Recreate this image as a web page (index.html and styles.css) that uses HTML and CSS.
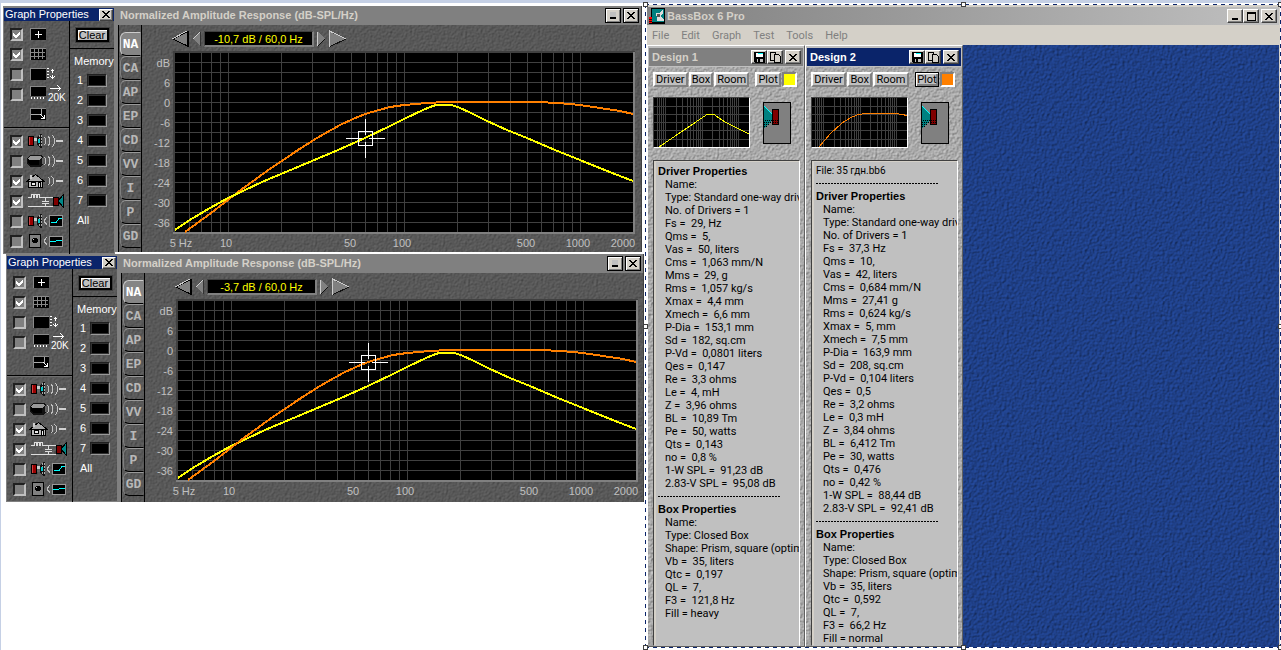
FILE: index.html
```html
<!DOCTYPE html>
<html lang="en">
<head>
    <meta charset="UTF-8">
    <meta name="viewport" content="width=device-width, initial-scale=1.0">
    <title>BassBox 6 Pro</title>
    <link rel="stylesheet" href="styles.css">
</head>
<body>
    <!-- shared icons -->
    <svg class="defs" width="0" height="0" aria-hidden="true">
        <symbol id="i-close" viewBox="0 0 8 7"><path d="M0 0h2v1h1v1h2V1h1V0h2v1H7v1H6v1H5v1h1v1h1v1h1v1H6V6H5V5H3v1H2v1H0V6h1V5h1V4h1V3H2V2H1V1H0z" fill="#000"/></symbol>
        <symbol id="i-min" viewBox="0 0 8 7"><path d="M1 5h6v2H1z" fill="#000"/></symbol>
        <symbol id="i-min-off" viewBox="0 0 8 7"><path d="M1 0h6v5H1z" fill="#c0c0c0"/><path d="M1 5h6v2H1z" fill="#000"/></symbol>
        <symbol id="i-max" viewBox="0 0 9 9"><path d="M0 0h9v9H0zM1 2v6h7V2z" fill="#000" fill-rule="evenodd"/></symbol>
        <symbol id="i-save" viewBox="0 0 11 11"><path d="M0 0h11v11H1l-1-1z" fill="#000"/><path d="M2 1h7v4H2z" fill="#fff"/><path d="M4 1h5v1H4z" fill="#0ff"/><path d="M3 7h6v3H3z" fill="#c0c0c0"/><path d="M4 7h2v3H4z" fill="#000"/></symbol>
        <symbol id="i-copy" viewBox="0 0 11 11"><path d="M.5.5h5v8h-5z" fill="#d4d0c8" stroke="#000"/><path d="M4.500 2.500h4l2 2v6h-6z" fill="#d4d0c8" stroke="#000"/></symbol>
        <symbol id="i-cursor" viewBox="0 0 36 16"><path d="M0 2h16v12H0z" fill="#000"/><path d="M0 14V2h16" fill="none" stroke="#8a8a8a"/><path d="M8.500 5v7M5 8.500h7" stroke="#fff"/></symbol>
        <symbol id="i-grid" viewBox="0 0 36 16"><path d="M0 2h16v12H0z" fill="#000"/><path d="M0 14V2h16" fill="none" stroke="#8a8a8a"/><path d="M4.500 3v10M8.500 3v10M12.500 3v10M1 6.500h14M1 10.500h14" stroke="#888"/></symbol>
        <symbol id="i-vscale" viewBox="0 0 36 16"><path d="M0 2h16v12H0z" fill="#000"/><path d="M0 14V2h16" fill="none" stroke="#8a8a8a"/><path d="M17 2.500h2M17 5.500h2M17 8.500h2M17 11.500h2M22.500 3v4M22.500 9v4M20.500 5.500l2-2 2 2M20.500 10.500l2 2 2-2" fill="none" stroke="#fff"/></symbol>
        <symbol id="i-hscale" viewBox="0 0 36 16"><path d="M0 1h16v10H0z" fill="#000"/><path d="M0 11V1h16" fill="none" stroke="#8a8a8a"/><path d="M1.500 12v2M4.500 12v2M7.500 12v2M10.500 12v2M13.500 12v2M20 3.500h10M27.500.5l3 3-3 3" fill="none" stroke="#fff"/></symbol>
        <symbol id="i-resize" viewBox="0 0 36 16"><path d="M0 2h16v12H0z" fill="#000"/><path d="M0 14V2h16" fill="none" stroke="#8a8a8a"/><path d="M1 8.500h10.500V3" fill="none" stroke="#aaa"/><path d="M10.500 8.500l4 4M11 12.500h4M14.500 9v4" stroke="#fff"/></symbol>
        <symbol id="i-driver" viewBox="0 0 36 16"><path d="M-2 3h6v10h-6z" fill="#000"/><path d="M-1 4h4v8h-4z" fill="#900"/><path d="M-1 4h1v8h-1z" fill="#c44"/><path d="M4 5h3v6H4z" fill="#ccc"/><path d="M4 8h3v3H4z" fill="#666"/><path d="M7 4l3-3h2v14h-2l-3-3z" fill="#111"/><path d="M9.500 2v12M11.500 2v12" stroke="#aaa" stroke-dasharray="2 1"/><path d="M8 6h2v4H8z" fill="#0cc"/></symbol>
        <symbol id="i-wave" viewBox="0 0 36 16"><path d="M14.500 4l1 2v4l-1 2M18.500 3l1 3v4l-1 3M22.500 2l2 4v4l-2 4" fill="none" stroke="#c0c0c0"/><path d="M26 8h7" stroke="#d0d0d0" stroke-width="2"/></symbol>
        <symbol id="i-box" viewBox="0 0 36 16"><path d="M-3 5l3-3h11l2 2v7l-3 3H0l-3-3z" fill="#111"/><path d="M-2 6l2-3h10l2 1-3 3H-1z" fill="#999"/><path d="M-2 6l2 1h9v5H0l-2-2z" fill="#000"/><path d="M12 5v6" stroke="#666"/></symbol>
        <symbol id="i-room" viewBox="0 0 36 16"><path d="M-1.500 7.500h14v7h-14z" fill="#bbb" stroke="#000"/><path d="M-3.500 8.500l9-7 9 7z" fill="#aaa" stroke="#000"/><path d="M0 2h2v4H0z" fill="#ccc"/><path d="M1.500 9.500h4v3h-4zM8.500 9.500h2v5h-2z" fill="#eee" stroke="#000"/><path d="M18.500 4l1 2v4l-1 2M21.500 3l2 3v4l-2 3" fill="none" stroke="#c0c0c0"/><path d="M26 8h7" stroke="#d0d0d0" stroke-width="2"/></symbol>
        <symbol id="i-net" viewBox="0 0 36 16"><path d="M-2 4.500h3l1-3h1l1 3 1-3h1l1 3 1-3h1l1 3h13M-2 13.500h25M15.500 5v3M12 8.500h7M12 10.500h7M15.500 11v2" fill="none" stroke="#ddd"/><path d="M23 4h5v8h-5z" fill="#800000" stroke="#000"/><path d="M28 8l5-6v12l-5-6z" fill="#088" stroke="#000"/></symbol>
        <symbol id="i-curve" viewBox="0 0 36 16"><path d="M17 4l-3 4 3 4" fill="none" stroke="#c0c0c0"/><path d="M19.500 2.500h13v11h-13z" fill="#000" stroke="#999"/><path d="M21 9.500h5l3-4h3" fill="none" stroke="#0ff"/></symbol>
        <symbol id="i-room-curve" viewBox="0 0 36 16"><path d="M-.5 1.500h11v13h-11z" fill="#808080" stroke="#000"/><path d="M3 5h4v5H3z" fill="#000"/><path d="M2 6h6v3H2z" fill="#000"/><path d="M3 6h1v1H3z" fill="#ccc"/><path d="M17 4l-3 4 3 4" fill="none" stroke="#c0c0c0"/><path d="M19.500 3.500h13v10h-13z" fill="#000" stroke="#999"/><path d="M20 8.500h5l2-1h5" fill="none" stroke="#0ff"/></symbol>
        <symbol id="i-left" viewBox="0 0 17 16"><path d="M1 8L15.500 1v14z" fill="#808080" stroke="#000"/><path d="M15.500 0v16" stroke="#000" stroke-width="2"/><path d="M0 8L15 0" stroke="#ccc"/></symbol>
        <symbol id="i-left-s" viewBox="0 0 9 16"><path d="M1 8l7-7v14z" fill="#808080"/><path d="M1 8l7-7" stroke="#ccc"/><path d="M8.500 1v14" stroke="#333"/></symbol>
        <symbol id="i-right-s" viewBox="0 0 9 16"><path d="M1 1l7 7-7 7z" fill="#808080"/><path d="M.5 15V1" stroke="#ccc"/><path d="M1 15l7-7" stroke="#111"/></symbol>
        <symbol id="i-right" viewBox="0 0 18 16"><path d="M1 1l16 7-16 7z" fill="#808080"/><path d="M.5 16V0L17 8" fill="none" stroke="#ccc"/><path d="M1 15.500L17 8" stroke="#111"/></symbol>
        <symbol id="i-speaker" viewBox="0 0 28 42"><path d="M.5.5h27v41H.5z" fill="#808080" stroke="#000"/><path d="M1 4l8 8v6l-8 9z" fill="#008080"/><path d="M1 4l8 8" stroke="#0ff"/><path d="M9 18.500H1M8 20.500H1M6 22.500H1M4 24.500H1" stroke="#000" stroke-dasharray="1 1"/><path d="M9.500 7.500h6v15h-6z" fill="#800000" stroke="#000"/><path d="M10 18.500h5M10 20.500h5" stroke="#000" stroke-dasharray="1 1"/></symbol>
        <symbol id="plot-grid" viewBox="0 0 458 179">
            <path d="M0 0h458v179H0z" fill="#000"/>
            <path d="M0 9.500h458M0 19.500h458M0 29.500h458M0 39.500h458M0 49.500h458M0 59.500h458M0 69.500h458M0 79.500h458M0 89.500h458M0 99.500h458M0 109.500h458M0 119.500h458M0 129.500h458M0 139.500h458M0 149.500h458M0 159.500h458M0 169.500h458" stroke="#404040"/>
            <path d="M14.500 0v179M26.500 0v179M36.500 0v179M45.500 0v179M53.500 0v179M106.500 0v179M137.500 0v179M159.500 0v179M176.500 0v179M190.500 0v179M202.500 0v179M212.500 0v179M221.500 0v179M229.500 0v179M282.500 0v179M313.500 0v179M335.500 0v179M352.500 0v179M366.500 0v179M378.500 0v179M388.500 0v179M397.500 0v179M405.500 0v179" stroke="#404040"/>
        </symbol>
        <symbol id="curve-1" viewBox="0 0 458 179"><path d="M0 177L13 168 35 155 53 145 68 138 87 129 106 121 137 108 163 97 190 85 215 73 229 66 248 57 255 54 261 52 268 51.500 276 52 283 54 296 60 312 68 332 77 352 85 380 97 405 107 432 118 458 128" fill="none" stroke="#ff0" stroke-width="2"/></symbol>
        <symbol id="curve-2" viewBox="0 0 458 179"><path d="M10 179L32 163 53 147 63 139 92 118 123 97 142 85 165 72 178 66 190 61 204 57 215 54 229 52 252 50 270 49 363 49 383 50 405 52 425 55 445 58 458 61" fill="none" stroke="#ff8000" stroke-width="2"/></symbol>
        <symbol id="cross" viewBox="0 0 40 40"><path d="M12.500 12.500h14v14h-14z" fill="none" stroke="#fff"/><path d="M0 19.500h16M23 19.500h16M19.500 0v16M19.500 23v16" stroke="#fff"/></symbol>
        <symbol id="thumb-grid" viewBox="0 0 95 49">
            <path d="M0 0h95v49H0z" fill="#000"/>
            <path d="M0 8.500h95M0 16.500h95M0 24.500h95M0 32.500h95M0 41.500h95M3.500 0v49M5.500 0v49M7.500 0v49M9.500 0v49M11.500 0v49M22.500 0v49M28.500 0v49M33.500 0v49M36.500 0v49M39.500 0v49M42.500 0v49M44.500 0v49M46.500 0v49M48.500 0v49M58.500 0v49M65.500 0v49M69.500 0v49M73.500 0v49M76.500 0v49M78.500 0v49M80.500 0v49M82.500 0v49M84.500 0v49" stroke="#404040"/>
        </symbol>
    </svg>

    <div class="desktop">
        <main class="graphs">
            <div class="graph-row">
                <section class="props">
                    <header class="props-title"><span>Graph Properties</span><button class="win-btn small" aria-label="Close"><svg width="8" height="7"><use href="#i-close"/></svg></button></header>
                    <div class="props-body">
                        <div class="options">
                            <div class="group">
                                <label class="option"><input type="checkbox" aria-label="Cursor" checked><svg width="36" height="16"><use href="#i-cursor"/></svg></label>
                                <label class="option"><input type="checkbox" aria-label="Grid" checked><svg width="36" height="16"><use href="#i-grid"/></svg></label>
                                <label class="option"><input type="checkbox" aria-label="Vertical scale"><svg width="36" height="16"><use href="#i-vscale"/></svg></label>
                                <label class="option"><input type="checkbox" aria-label="Extend range"><svg width="36" height="18"><use href="#i-hscale" width="36" height="16"/><text x="18" y="16" class="khz">20K</text></svg></label>
                                <button class="resize" aria-label="Resize"><svg width="36" height="16"><use href="#i-resize"/></svg></button>
                            </div>
                            <div class="group">
                                <label class="option"><input type="checkbox" aria-label="Driver" checked><svg width="36" height="16"><use href="#i-driver"/><use href="#i-wave"/></svg></label>
                                <label class="option"><input type="checkbox" aria-label="Box"><svg width="36" height="16"><use href="#i-box"/><use href="#i-wave"/></svg></label>
                                <label class="option"><input type="checkbox" aria-label="Room" checked><svg width="36" height="16"><use href="#i-room"/></svg></label>
                                <label class="option"><input type="checkbox" aria-label="Network" checked><svg width="36" height="16"><use href="#i-net"/></svg></label>
                                <label class="option"><input type="checkbox" aria-label="Driver response"><svg width="36" height="16"><use href="#i-driver"/><use href="#i-curve"/></svg></label>
                                <label class="option"><input type="checkbox" aria-label="Room response"><svg width="36" height="16"><use href="#i-room-curve"/></svg></label>
                            </div>
                        </div>
                        <div class="memory">
                            <div class="clear-row"><button class="clear">Clear</button></div>
                            <div class="memory-title">Memory</div>
                            <div class="slot">1<button aria-label="Memory 1"></button></div>
                            <div class="slot">2<button aria-label="Memory 2"></button></div>
                            <div class="slot">3<button aria-label="Memory 3"></button></div>
                            <div class="slot">4<button aria-label="Memory 4"></button></div>
                            <div class="slot">5<button aria-label="Memory 5"></button></div>
                            <div class="slot">6<button aria-label="Memory 6"></button></div>
                            <div class="slot">7<button aria-label="Memory 7"></button></div>
                            <div class="slot">All</div>
                        </div>
                    </div>
                </section>
                <section class="response">
                    <header class="response-title">
                        <h2>Normalized Amplitude Response (dB-SPL/Hz)</h2>
                        <button class="win-btn framed" aria-label="Minimize"><svg width="8" height="7"><use href="#i-min-off"/></svg></button>
                        <button class="win-btn framed" aria-label="Close"><svg width="8" height="7"><use href="#i-close"/></svg></button>
                    </header>
                    <div class="response-body">
                        <nav class="tabs">
                            <button class="tab active">NA</button>
                            <button class="tab">CA</button>
                            <button class="tab">AP</button>
                            <button class="tab">EP</button>
                            <button class="tab">CD</button>
                            <button class="tab">VV</button>
                            <button class="tab">I</button>
                            <button class="tab">P</button>
                            <button class="tab">GD</button>
                        </nav>
                        <div class="chart">
                            <div class="readout">
                                <button aria-label="Fast left"><svg width="17" height="16"><use href="#i-left"/></svg></button>
                                <button aria-label="Left"><svg width="9" height="16"><use href="#i-left-s"/></svg></button>
                                <output>-10,7 dB / 60,0 Hz</output>
                                <button aria-label="Right"><svg width="9" height="16"><use href="#i-right-s"/></svg></button>
                                <button aria-label="Fast right"><svg width="18" height="16"><use href="#i-right"/></svg></button>
                            </div>
                            <svg class="plot" viewBox="0 0 496 201">
                                <path d="M31 0h462v183H31z" fill="#404040"/>
                                <path d="M31 181h462v2H31zM491 1h2v182h-2z" fill="#808080"/>
                                <use href="#plot-grid" x="33" y="2" width="458" height="179"/>
                                <use href="#curve-2" x="33" y="2" width="458" height="179"/>
                                <use href="#curve-1" x="33" y="2" width="458" height="179"/>
                                <use href="#cross" x="204" y="68" width="40" height="40"/>
                                <g class="y-labels">
                                    <text x="28" y="16">dB</text>
                                    <text x="28" y="36">6</text>
                                    <text x="28" y="56">0</text>
                                    <text x="28" y="76">-6</text>
                                    <text x="28" y="96">-12</text>
                                    <text x="28" y="116">-18</text>
                                    <text x="28" y="136">-24</text>
                                    <text x="28" y="156">-30</text>
                                    <text x="28" y="176">-36</text>
                                </g>
                                <g class="x-labels">
                                    <text x="39" y="196">5 Hz</text>
                                    <text x="84" y="196">10</text>
                                    <text x="208" y="196">50</text>
                                    <text x="260" y="196">100</text>
                                    <text x="384" y="196">500</text>
                                    <text x="436" y="196">1000</text>
                                    <text x="481" y="196">2000</text>
                                </g>
                            </svg>
                        </div>
                    </div>
                </section>
            </div>

            <div class="graph-row second">
                <section class="props">
                    <header class="props-title"><span>Graph Properties</span><button class="win-btn small" aria-label="Close"><svg width="8" height="7"><use href="#i-close"/></svg></button></header>
                    <div class="props-body">
                        <div class="options">
                            <div class="group">
                                <label class="option"><input type="checkbox" aria-label="Cursor" checked><svg width="36" height="16"><use href="#i-cursor"/></svg></label>
                                <label class="option"><input type="checkbox" aria-label="Grid" checked><svg width="36" height="16"><use href="#i-grid"/></svg></label>
                                <label class="option"><input type="checkbox" aria-label="Vertical scale"><svg width="36" height="16"><use href="#i-vscale"/></svg></label>
                                <label class="option"><input type="checkbox" aria-label="Extend range"><svg width="36" height="18"><use href="#i-hscale" width="36" height="16"/><text x="18" y="16" class="khz">20K</text></svg></label>
                                <button class="resize" aria-label="Resize"><svg width="36" height="16"><use href="#i-resize"/></svg></button>
                            </div>
                            <div class="group">
                                <label class="option"><input type="checkbox" aria-label="Driver" checked><svg width="36" height="16"><use href="#i-driver"/><use href="#i-wave"/></svg></label>
                                <label class="option"><input type="checkbox" aria-label="Box"><svg width="36" height="16"><use href="#i-box"/><use href="#i-wave"/></svg></label>
                                <label class="option"><input type="checkbox" aria-label="Room" checked><svg width="36" height="16"><use href="#i-room"/></svg></label>
                                <label class="option"><input type="checkbox" aria-label="Network" checked><svg width="36" height="16"><use href="#i-net"/></svg></label>
                                <label class="option"><input type="checkbox" aria-label="Driver response"><svg width="36" height="16"><use href="#i-driver"/><use href="#i-curve"/></svg></label>
                                <label class="option"><input type="checkbox" aria-label="Room response"><svg width="36" height="16"><use href="#i-room-curve"/></svg></label>
                            </div>
                        </div>
                        <div class="memory">
                            <div class="clear-row"><button class="clear">Clear</button></div>
                            <div class="memory-title">Memory</div>
                            <div class="slot">1<button aria-label="Memory 1"></button></div>
                            <div class="slot">2<button aria-label="Memory 2"></button></div>
                            <div class="slot">3<button aria-label="Memory 3"></button></div>
                            <div class="slot">4<button aria-label="Memory 4"></button></div>
                            <div class="slot">5<button aria-label="Memory 5"></button></div>
                            <div class="slot">6<button aria-label="Memory 6"></button></div>
                            <div class="slot">7<button aria-label="Memory 7"></button></div>
                            <div class="slot">All</div>
                        </div>
                    </div>
                </section>
                <section class="response">
                    <header class="response-title">
                        <h2>Normalized Amplitude Response (dB-SPL/Hz)</h2>
                        <button class="win-btn framed" aria-label="Minimize"><svg width="8" height="7"><use href="#i-min-off"/></svg></button>
                        <button class="win-btn framed" aria-label="Close"><svg width="8" height="7"><use href="#i-close"/></svg></button>
                    </header>
                    <div class="response-body">
                        <nav class="tabs">
                            <button class="tab active">NA</button>
                            <button class="tab">CA</button>
                            <button class="tab">AP</button>
                            <button class="tab">EP</button>
                            <button class="tab">CD</button>
                            <button class="tab">VV</button>
                            <button class="tab">I</button>
                            <button class="tab">P</button>
                            <button class="tab">GD</button>
                        </nav>
                        <div class="chart">
                            <div class="readout">
                                <button aria-label="Fast left"><svg width="17" height="16"><use href="#i-left"/></svg></button>
                                <button aria-label="Left"><svg width="9" height="16"><use href="#i-left-s"/></svg></button>
                                <output>-3,7 dB / 60,0 Hz</output>
                                <button aria-label="Right"><svg width="9" height="16"><use href="#i-right-s"/></svg></button>
                                <button aria-label="Fast right"><svg width="18" height="16"><use href="#i-right"/></svg></button>
                            </div>
                            <svg class="plot" viewBox="0 0 496 201">
                                <path d="M31 0h462v183H31z" fill="#404040"/>
                                <path d="M31 181h462v2H31zM491 1h2v182h-2z" fill="#808080"/>
                                <use href="#plot-grid" x="33" y="2" width="458" height="179"/>
                                <use href="#curve-1" x="33" y="2" width="458" height="179"/>
                                <use href="#curve-2" x="33" y="2" width="458" height="179"/>
                                <use href="#cross" x="204" y="44" width="40" height="40"/>
                                <g class="y-labels">
                                    <text x="28" y="16">dB</text>
                                    <text x="28" y="36">6</text>
                                    <text x="28" y="56">0</text>
                                    <text x="28" y="76">-6</text>
                                    <text x="28" y="96">-12</text>
                                    <text x="28" y="116">-18</text>
                                    <text x="28" y="136">-24</text>
                                    <text x="28" y="156">-30</text>
                                    <text x="28" y="176">-36</text>
                                </g>
                                <g class="x-labels">
                                    <text x="39" y="196">5 Hz</text>
                                    <text x="84" y="196">10</text>
                                    <text x="208" y="196">50</text>
                                    <text x="260" y="196">100</text>
                                    <text x="384" y="196">500</text>
                                    <text x="436" y="196">1000</text>
                                    <text x="481" y="196">2000</text>
                                </g>
                            </svg>
                        </div>
                    </div>
                </section>
            </div>
        </main>

        <div class="app-area">
            <section class="app">
                <header class="app-title">
                    <svg width="16" height="16" viewBox="0 0 16 16"><path d="M2 0h14v16H0V9h2z" fill="#000"/><path d="M3 1h12v13H3z" fill="#008080"/><path d="M7 5h3l4-3v4l-3 2 4 3v2H8V8H7z" fill="#ddd"/><path d="M8 6h3v3H8z" fill="#555"/><path d="M0 9h3v6H0z" fill="#f00"/><path d="M0 11.500h3M0 13.500h3" stroke="#400"/></svg>
                    <h1>BassBox 6 Pro</h1>
                    <button class="win-btn" aria-label="Minimize"><svg width="8" height="7"><use href="#i-min"/></svg></button>
                    <button class="win-btn" aria-label="Maximize"><svg width="9" height="9"><use href="#i-max"/></svg></button>
                    <button class="win-btn close" aria-label="Close"><svg width="8" height="7"><use href="#i-close"/></svg></button>
                </header>
                <nav class="menu">
                    <button>File</button>
                    <button>Edit</button>
                    <button>Graph</button>
                    <button>Test</button>
                    <button>Tools</button>
                    <button>Help</button>
                </nav>
                <div class="workspace">
                    <article class="design">
                        <header class="design-title">
                            <h2>Design 1</h2>
                            <button class="win-btn" aria-label="Save"><svg width="11" height="11"><use href="#i-save"/></svg></button>
                            <button class="win-btn" aria-label="Copy"><svg width="11" height="11"><use href="#i-copy"/></svg></button>
                            <button class="win-btn close" aria-label="Close"><svg width="8" height="7"><use href="#i-close"/></svg></button>
                        </header>
                        <div class="toolbar">
                            <button>Driver</button>
                            <button>Box</button>
                            <button>Room</button>
                            <button class="plot-btn">Plot</button>
                            <button class="swatch yellow" aria-label="Plot color"></button>
                        </div>
                        <div class="preview">
                            <svg class="thumb" width="95" height="49" viewBox="0 0 95 49"><use href="#thumb-grid"/><path d="M5 49L30 32 53 16.500H60L71 24 85 31 95 36" fill="none" stroke="#ff0"/></svg>
                            <svg width="28" height="42"><use href="#i-speaker"/></svg>
                        </div>
                        <div class="info">
                            <h3>Driver Properties</h3>
                            <p>Name:</p>
                            <p>Type: Standard one-way driver</p>
                            <p>No. of Drivers = 1</p>
                            <p>Fs =  29, Hz</p>
                            <p>Qms =  5,</p>
                            <p>Vas =  50, liters</p>
                            <p>Cms =  1,063 mm/N</p>
                            <p>Mms =  29, g</p>
                            <p>Rms =  1,057 kg/s</p>
                            <p>Xmax =  4,4 mm</p>
                            <p>Xmech =  6,6 mm</p>
                            <p>P-Dia =  153,1 mm</p>
                            <p>Sd =  182, sq.cm</p>
                            <p>P-Vd =  0,0801 liters</p>
                            <p>Qes =  0,147</p>
                            <p>Re =  3,3 ohms</p>
                            <p>Le =  4, mH</p>
                            <p>Z =  3,96 ohms</p>
                            <p>BL =  10,89 Tm</p>
                            <p>Pe =  50, watts</p>
                            <p>Qts =  0,143</p>
                            <p>no =  0,8 %</p>
                            <p>1-W SPL =  91,23 dB</p>
                            <p>2.83-V SPL =  95,08 dB</p>
                            <hr>
                            <h3>Box Properties</h3>
                            <p>Name:</p>
                            <p>Type: Closed Box</p>
                            <p>Shape: Prism, square (optimum)</p>
                            <p>Vb =  35, liters</p>
                            <p>Qtc =  0,197</p>
                            <p>QL =  7,</p>
                            <p>F3 =  121,8 Hz</p>
                            <p>Fill = heavy</p>
                        </div>
                    </article>
                    <article class="design current">
                        <header class="design-title">
                            <h2>Design 2</h2>
                            <button class="win-btn" aria-label="Save"><svg width="11" height="11"><use href="#i-save"/></svg></button>
                            <button class="win-btn" aria-label="Copy"><svg width="11" height="11"><use href="#i-copy"/></svg></button>
                            <button class="win-btn close" aria-label="Close"><svg width="8" height="7"><use href="#i-close"/></svg></button>
                        </header>
                        <div class="toolbar">
                            <button>Driver</button>
                            <button>Box</button>
                            <button>Room</button>
                            <button class="plot-btn pressed">Plot</button>
                            <button class="swatch orange" aria-label="Plot color"></button>
                        </div>
                        <div class="preview">
                            <svg class="thumb" width="95" height="49" viewBox="0 0 95 49"><use href="#thumb-grid"/><path d="M7 49L18 36 30 25 38 20 45 17 52 15.500H84L90 16.500 95 17.500" fill="none" stroke="#ff8000"/></svg>
                            <svg width="28" height="42"><use href="#i-speaker"/></svg>
                        </div>
                        <div class="info">
                            <p class="file">File: 35 гдн.bb6</p>
                            <hr>
                            <h3>Driver Properties</h3>
                            <p>Name:</p>
                            <p>Type: Standard one-way driver</p>
                            <p>No. of Drivers = 1</p>
                            <p>Fs =  37,3 Hz</p>
                            <p>Qms =  10,</p>
                            <p>Vas =  42, liters</p>
                            <p>Cms =  0,684 mm/N</p>
                            <p>Mms =  27,41 g</p>
                            <p>Rms =  0,624 kg/s</p>
                            <p>Xmax =  5, mm</p>
                            <p>Xmech =  7,5 mm</p>
                            <p>P-Dia =  163,9 mm</p>
                            <p>Sd =  208, sq.cm</p>
                            <p>P-Vd =  0,104 liters</p>
                            <p>Qes =  0,5</p>
                            <p>Re =  3,2 ohms</p>
                            <p>Le =  0,3 mH</p>
                            <p>Z =  3,84 ohms</p>
                            <p>BL =  6,412 Tm</p>
                            <p>Pe =  30, watts</p>
                            <p>Qts =  0,476</p>
                            <p>no =  0,42 %</p>
                            <p>1-W SPL =  88,44 dB</p>
                            <p>2.83-V SPL =  92,41 dB</p>
                            <hr>
                            <h3>Box Properties</h3>
                            <p>Name:</p>
                            <p>Type: Closed Box</p>
                            <p>Shape: Prism, square (optimum)</p>
                            <p>Vb =  35, liters</p>
                            <p>Qtc =  0,592</p>
                            <p>QL =  7,</p>
                            <p>F3 =  66,2 Hz</p>
                            <p>Fill = normal</p>
                        </div>
                    </article>
                </div>
            </section>
            <div class="marquee">
                <i class="handle top left"></i>
                <i class="handle top center"></i>
                <i class="handle top right"></i>
                <i class="handle middle left"></i>
                <i class="handle middle right"></i>
                <i class="handle bottom left"></i>
                <i class="handle bottom center"></i>
                <i class="handle bottom right"></i>
            </div>
        </div>
    </div>
</body>
</html>
```
FILE: styles.css
```css
* {
    box-sizing: border-box;
}
body {
    margin: 0;
    font-family: "Liberation Sans", Arial, sans-serif;
    font-size: 11px;
    line-height: 13px;
    color: #000;
    background-color: #fff;
}
h1, h2, h3, p {
    margin: 0;
    font-size: 11px;
}
button {
    font: inherit;
    color: inherit;
    padding: 0;
    margin: 0;
    border: none;
    background: none;
}
svg {
    display: block;
    flex: none;
    overflow: visible;
    shape-rendering: crispEdges;
}
symbol {
    overflow: visible;
}
.defs {
    position: absolute;
}

.desktop {
    display: grid;
    grid-template-columns: minmax(644px, 50%) 1fr;
    height: 100vh;
    min-height: 650px;
    border-top: 3px solid #c5d0e5;
}
.graphs {
    padding: 3px 0 0 2px;
    border-left: 1px solid #c5d0e5;
}
.graph-row {
    display: flex;
    align-items: flex-start;
    height: 248px;
    padding-right: 2px;
}
.graph-row.second {
    padding-left: 3px;
    padding-right: 0;
}

/* stone textures */
.props, .response, .design, .workspace {
    background-size: 128px 128px;
}
.props, .response {
    background-color: #585858;
    background-image: url("data:image/svg+xml,%3Csvg xmlns='http://www.w3.org/2000/svg' width='128' height='128'%3E%3Cfilter id='f' x='0' y='0' width='100%25' height='100%25' color-interpolation-filters='sRGB'%3E%3CfeTurbulence type='fractalNoise' baseFrequency='.45' numOctaves='2' stitchTiles='stitch'/%3E%3CfeDiffuseLighting surfaceScale='.6' lighting-color='%236c6c6c'%3E%3CfeDistantLight azimuth='225' elevation='55'/%3E%3C/feDiffuseLighting%3E%3C/filter%3E%3Crect width='128' height='128' filter='url(%23f)'/%3E%3C/svg%3E");
}
.design {
    background-color: #a8a8a8;
    background-image: url("data:image/svg+xml,%3Csvg xmlns='http://www.w3.org/2000/svg' width='128' height='128'%3E%3Cfilter id='f' x='0' y='0' width='100%25' height='100%25' color-interpolation-filters='sRGB'%3E%3CfeTurbulence type='fractalNoise' baseFrequency='.45' numOctaves='2' stitchTiles='stitch'/%3E%3CfeDiffuseLighting surfaceScale='.8' lighting-color='%23d0d0d0'%3E%3CfeDistantLight azimuth='225' elevation='55'/%3E%3C/feDiffuseLighting%3E%3C/filter%3E%3Crect width='128' height='128' filter='url(%23f)'/%3E%3C/svg%3E");
}
.workspace {
    background-color: #1e3f88;
    background-image: url("data:image/svg+xml,%3Csvg xmlns='http://www.w3.org/2000/svg' width='128' height='128'%3E%3Cfilter id='f' x='0' y='0' width='100%25' height='100%25' color-interpolation-filters='sRGB'%3E%3CfeTurbulence type='fractalNoise' baseFrequency='.4' numOctaves='2' stitchTiles='stitch'/%3E%3CfeDiffuseLighting surfaceScale='.9' lighting-color='%23264ea6'%3E%3CfeDistantLight azimuth='225' elevation='55'/%3E%3C/feDiffuseLighting%3E%3C/filter%3E%3Crect width='128' height='128' filter='url(%23f)'/%3E%3C/svg%3E");
}

/* window buttons */
.win-btn {
    display: flex;
    align-items: center;
    justify-content: center;
    width: 16px;
    height: 14px;
    background-color: #d4d0c8;
    border: 1px solid;
    border-color: #fff #404040 #404040 #fff;
    box-shadow: inset -1px -1px #808080;
}
.win-btn.small {
    width: 14px;
    height: 12px;
}
.win-btn.framed {
    height: 15px;
    margin-left: 2px;
    border-color: #000;
    box-shadow: inset 1px 1px #fff, inset -1px -1px #808080;
}
.win-btn.close {
    margin-left: 2px;
}

/* graph properties */
.props {
    width: 112px;
    height: 248px;
    border: 1px solid #808080;
    border-top-width: 2px;
    color: #fff;
}
.props-title {
    display: flex;
    align-items: center;
    justify-content: space-between;
    height: 13px;
    padding: 0 1px;
    background-color: #0a246a;
    white-space: nowrap;
}
.props-body {
    display: flex;
}
.options {
    width: 66px;
    border-right: 1px solid #000;
}
.group {
    padding: 3px 0 3px 6px;
}
.group + .group {
    border-top: 1px solid #000;
    box-shadow: inset 0 1px #707070;
}
.option {
    display: flex;
    align-items: center;
    gap: 7px;
    height: 20px;
}
.option input {
    appearance: none;
    width: 13px;
    height: 13px;
    margin: 0;
    border: 2px solid;
    border-color: #202020 #c0c0c0 #c0c0c0 #202020;
    background-color: #808080;
}
.option input:checked {
    background: #808080 url("data:image/svg+xml,%3Csvg xmlns='http://www.w3.org/2000/svg' viewBox='0 0 9 9' shape-rendering='crispEdges'%3E%3Cpath d='M1 3v3l2 2h1l4-4V1L4 5H3z' fill='white'/%3E%3C/svg%3E") center / 9px 9px no-repeat;
}
.khz {
    font-size: 10px;
    fill: #fff;
}
.resize {
    display: flex;
    align-items: center;
    height: 20px;
    margin-left: 20px;
}
.memory {
    flex: 1;
    white-space: nowrap;
}
.clear-row {
    display: flex;
    justify-content: center;
    align-items: center;
    height: 28px;
    border-bottom: 1px solid #000;
}
.clear {
    width: 33px;
    height: 14px;
    color: #000;
    line-height: 10px;
    background-color: #c0c0c0;
    border: 2px solid #000;
    box-shadow: inset 1px 1px #fff, 0 0 0 1px #404040;
}
.memory-title {
    padding: 6px 0 2px 4px;
}
.slot {
    display: flex;
    align-items: center;
    justify-content: space-between;
    height: 20px;
    padding: 0 7px 0 7px;
}
.slot button {
    width: 20px;
    height: 13px;
    background-color: #000;
    border: 2px solid;
    border-color: #202020 #999 #999 #202020;
    outline: 1px solid #303030;
    outline-offset: -2px;
}

/* response window */
.response {
    flex: 1;
    height: 246px;
    overflow: hidden;
    border-left: 3px solid #808080;
    border-right: 1px solid #404040;
    box-shadow: inset 1px 0 #000;
}
.second .response {
    height: 248px;
}
.response-title {
    display: flex;
    align-items: center;
    height: 19px;
    padding: 0 2px 0 2px;
    background-color: #808080;
    color: #d4d0c8;
}
.response-title h2 {
    flex: 1;
    white-space: nowrap;
}
.response-body {
    display: flex;
}
.tabs {
    width: 24px;
    height: 229px;
    padding: 7px 0 0 2px;
    border-right: 1px solid #000;
}
.tab {
    display: block;
    width: 21px;
    height: 24px;
    font: bold 13px "Liberation Mono", monospace;
    color: #b8b8b8;
    border: 1px solid;
    border-color: #999 transparent #000 #808080;
    border-radius: 6px 0 0 6px;
}
.tab.active {
    color: #fff;
    background-color: #858585;
    border-color: #ccc #858585 #000 #ccc;
}
.chart {
    flex: 1;
}
.readout {
    display: flex;
    align-items: center;
    gap: 3px;
    height: 26px;
    padding: 2px 0 0 30px;
}
.readout output {
    width: 110px;
    height: 16px;
    background-color: #000;
    color: #ff0;
    text-align: center;
    line-height: 14px;
    border: 1px solid #404040;
    border-right: 2px solid #808080;
    border-bottom: 2px solid #808080;
}
.plot {
    width: 496px;
    height: 201px;
}
.plot text {
    font-size: 11px;
    fill: #c0c0c0;
}
.y-labels {
    text-anchor: end;
}
.x-labels {
    text-anchor: middle;
}

/* main application */
.app-area {
    position: relative;
    min-height: 0;
    padding: 2px 1px 3px 3px;
}
.app {
    display: flex;
    flex-direction: column;
    height: 100%;
    padding: 2px 1px 0 0;
    background-color: #d4d0c8;
}
.app-title {
    display: flex;
    align-items: center;
    height: 18px;
    padding: 0 2px 0 2px;
    background: linear-gradient(to right, #808080, #c0c0c0);
    color: #d4d0c8;
}
.app-title h1 {
    flex: 1;
    padding-left: 2px;
}
.menu {
    display: flex;
    gap: 12px;
    height: 20px;
    padding-left: 5px;
    font-family: Roboto, Arial, sans-serif;
    color: #808080;
}
.workspace {
    flex: 1;
    min-height: 0;
    display: flex;
    overflow: hidden;
}
.design {
    width: 158px;
    display: flex;
    flex-direction: column;
    border: 1px solid;
    border-color: #fff #606060 #606060 #fff;
}
.design-title {
    display: flex;
    align-items: center;
    height: 21px;
    padding: 0 2px 0 3px;
    background-color: #808080;
    color: #d4d0c8;
    border: 1px solid #c0c0c0;
    border-top-width: 2px;
}
.current .design-title {
    background-color: #0a246a;
    color: #fff;
}
.design-title h2 {
    flex: 1;
}
.toolbar {
    display: flex;
    gap: 1px;
    padding: 5px 7px 0 5px;
    font-family: Roboto, Arial, sans-serif;
}
.toolbar button {
    flex: 1 1 auto;
    height: 15px;
    line-height: 11px;
    background-color: #c0c0c0;
    border: 2px solid;
    border-color: #fff #808080 #808080 #fff;
}
.toolbar .plot-btn {
    margin-left: 5px;
}
.toolbar .pressed {
    border: 1px solid #000;
    box-shadow: inset 1px 1px #fff, inset -2px -2px #808080;
}
.toolbar .swatch {
    flex: 0 0 15px;
    border-color: #808080 #fff #fff #808080;
}
.toolbar .yellow {
    background-color: #ff0;
}
.toolbar .orange {
    background-color: #ff8000;
}
.preview {
    display: flex;
    align-items: center;
    gap: 13px;
    padding: 10px 5px;
}
.thumb {
    box-sizing: content-box;
    border: 1px solid;
    border-color: #404040 #fff #fff #404040;
    overflow: hidden;
}
.info {
    flex: 1;
    min-height: 0;
    margin: 2px 4px 0 5px;
    padding: 3px 0 0 4px;
    overflow: hidden;
    background-color: #c0c0c0;
    border: 1px solid;
    border-color: #404040 #fff transparent #404040;
    box-shadow: inset 2px 1px #d4d0c8;
}
.info h3 {
    line-height: 14px;
}
.info hr + h3 {
    line-height: 13px;
}
.info p {
    padding-left: 7px;
    font-family: Roboto, Arial, sans-serif;
    white-space: pre;
}
.info .file {
    padding-left: 0;
    font-size: 10px;
}
.info hr {
    width: 122px;
    height: 1px;
    margin: 6px 0;
    border: none;
    background: repeating-linear-gradient(to right, #000 0 2px, transparent 2px 3px);
}

/* selection frame over the application */
.marquee {
    position: absolute;
    inset: 1px 0 2px 1px;
    pointer-events: none;
    background:
        repeating-linear-gradient(to right, #0a246a 0 4px, #fff 4px 8px) top / 100% 1px no-repeat,
        repeating-linear-gradient(to right, #0a246a 0 4px, #fff 4px 8px) bottom / 100% 1px no-repeat,
        repeating-linear-gradient(to bottom, #0a246a 0 4px, #fff 4px 8px) left / 1px 100% no-repeat,
        repeating-linear-gradient(to bottom, #0a246a 0 4px, #fff 4px 8px) right / 1px 100% no-repeat;
}
.handle {
    position: absolute;
    width: 5px;
    height: 5px;
    background-color: #fff;
    border: 1px solid #404040;
}
.handle.top {
    top: -2px;
}
.handle.middle {
    top: calc(50% - 2px);
}
.handle.bottom {
    bottom: -2px;
}
.handle.left {
    left: -2px;
}
.handle.center {
    left: calc(50% - 2px);
}
.handle.right {
    right: -2px;
}
```
